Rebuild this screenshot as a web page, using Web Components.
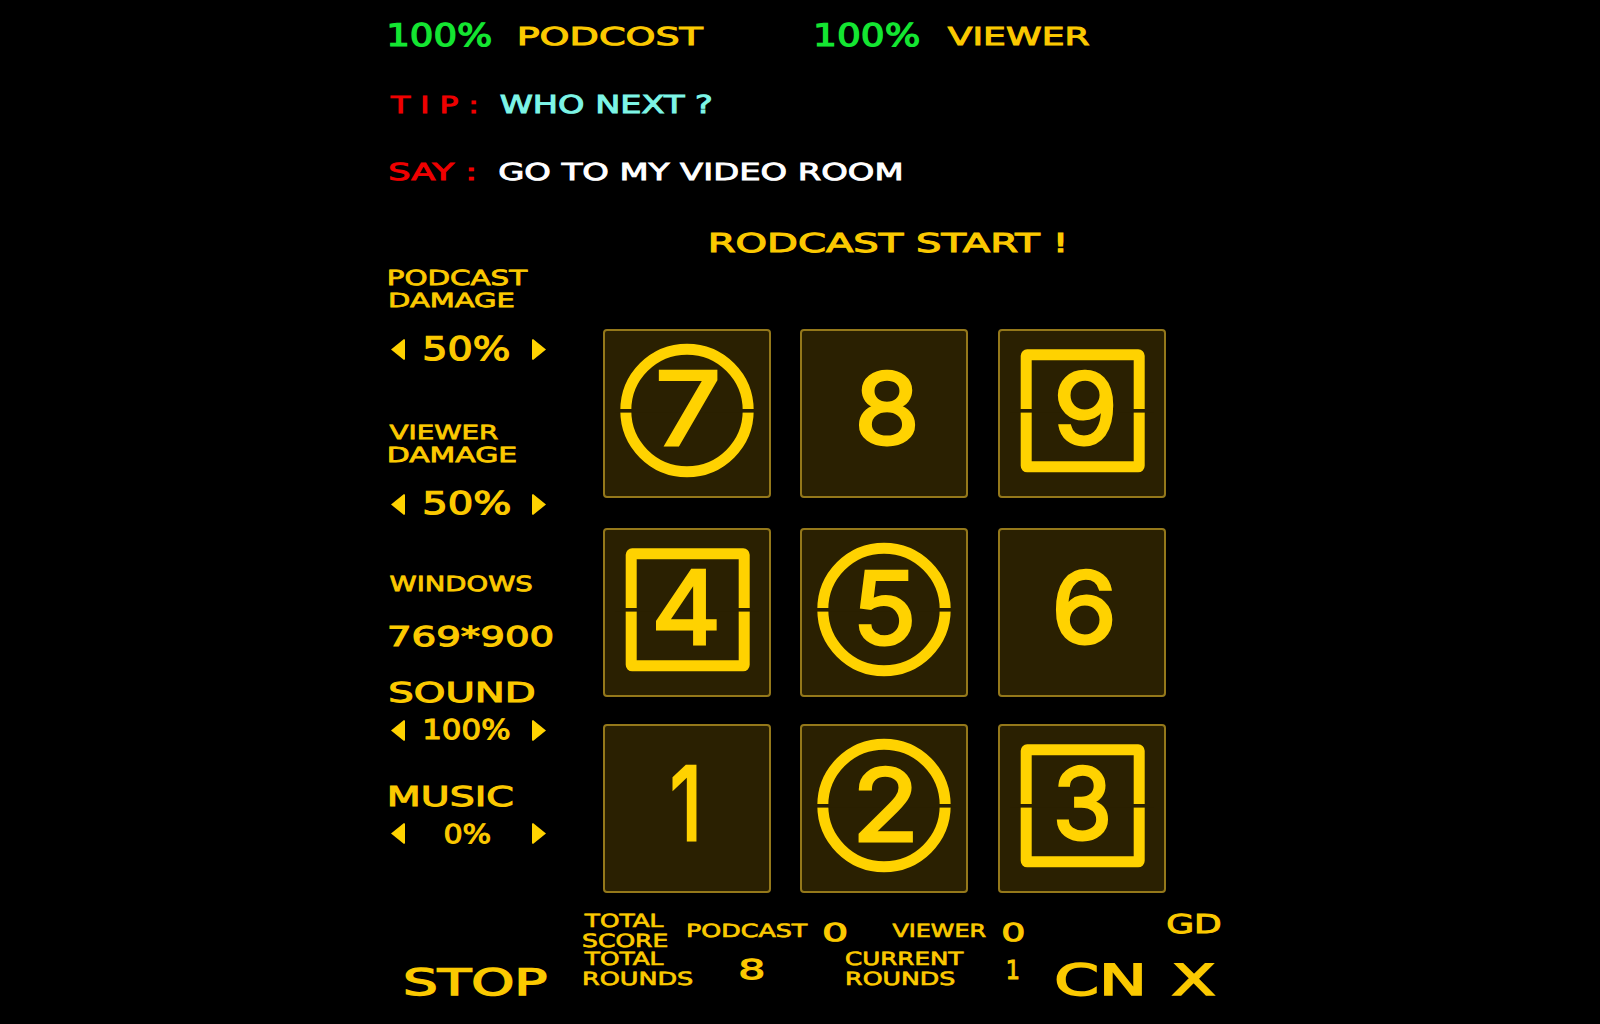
<!DOCTYPE html>
<html lang="en">
<head>
<meta charset="utf-8">
<title>Rodcast</title>
<style>
  html, body { margin: 0; background: #000; overflow: hidden; }
</style>
</head>
<body>
<hud-app></hud-app>
<script>
const measure = document.createElement('canvas').getContext('2d');
measure.textRendering = 'geometricPrecision';

// text fitted to the box of the reference: w = ink width, h = cap height
// with the ink attribute h is the height of the glyphs themselves (the board digits)
class HudText extends HTMLElement {
    connectedCallback() {
        if (this.shadowRoot) return;
        const shadow = this.attachShadow({ mode: 'open' });
        const w = +this.getAttribute('w');
        const h = +this.getAttribute('h');
        const family = this.getAttribute('font') || '"DejaVu Sans"';
        const stroke = +(this.getAttribute('stroke') || (h * 0.05).toFixed(2));
        const ink = this.hasAttribute('ink');
        const text = this.textContent.trim();

        measure.font = `400 100px ${family}`;
        const probe = measure.measureText(ink ? text : 'H');
        const size = (h - stroke) / ((probe.actualBoundingBoxAscent + (ink ? probe.actualBoundingBoxDescent : 0)) / 100);
        measure.font = `400 ${size}px ${family}`;
        const m = measure.measureText(text);
        const scale = w / (m.actualBoundingBoxLeft + m.actualBoundingBoxRight + stroke);
        const shiftX = (m.actualBoundingBoxLeft + stroke / 2) * scale;
        const below = (ink ? m.actualBoundingBoxDescent : 0) + stroke / 2;
        const shiftY = h / 2 - (m.fontBoundingBoxAscent - m.fontBoundingBoxDescent) / 2 - below;

        shadow.innerHTML = `
            <style>
                :host { display: block; flex: none; width: ${w}px; height: ${h}px; }
                span {
                    display: block;
                    width: max-content;
                    white-space: pre;
                    font: 400 ${size}px/${h}px ${family}, sans-serif;
                    text-rendering: geometricPrecision;
                    -webkit-text-stroke: ${stroke}px currentColor;
                    transform-origin: 0 0;
                    transform: translate(${shiftX}px, ${shiftY}px) scaleX(${scale});
                }
            </style>
            <span><slot></slot></span>
        `;
    }
}

class HudStepper extends HTMLElement {
    constructor() {
        super();
        const shadow = this.attachShadow({ mode: 'open' });
        shadow.innerHTML = `
            <style>
                :host {
                    display: grid;
                    grid-template-columns: 14px 1fr 14px;
                    align-items: center;
                    justify-items: center;
                    width: 155px;
                    margin-left: 2px;
                }
                svg { display: block; margin-top: 2px; fill: #ffd200; }
                .value { margin-right: 3px; }
            </style>
            <svg width="14" height="21" viewBox="0 0 14 21"><path d="M0 10.5 13 0 14 .8V20.2L13 21Z"/></svg>
            <div class="value"><slot></slot></div>
            <svg width="14" height="21" viewBox="0 0 14 21"><path d="M14 10.5 1 0 0 .8V20.2L1 21Z"/></svg>
        `;
    }
}

class HudCell extends HTMLElement {
    connectedCallback() {
        if (this.shadowRoot) return;
        const shadow = this.attachShadow({ mode: 'open' });
        const digit = this.getAttribute('digit');
        const mark = this.getAttribute('mark');
        const left = this.getAttribute('left');
        const w = this.getAttribute('w');

        let drawn = '';
        if (mark === 'ring') drawn = '<circle cx="84" cy="81.5" r="61.2" fill="none" stroke="#ffd200" stroke-width="11"/>';
        if (mark === 'box') drawn = '<rect x="28.2" y="25.8" width="113" height="112" rx="1" fill="none" stroke="#ffd200" stroke-width="11"/>';

        shadow.innerHTML = `
            <style>
                :host {
                    display: block;
                    position: relative;
                    box-sizing: border-box;
                    width: 168px;
                    height: 169px;
                    padding: 39px 0 0 ${left - 2}px;
                    background: #2a2001;
                    border: 2px solid #94781a;
                    border-radius: 4px;
                    color: #ffd200;
                }
                svg { position: absolute; left: -2px; top: -2px; }
                hud-text { position: relative; }
            </style>
            ${drawn ? `<svg width="168" height="169" viewBox="0 0 168 169">${drawn}<rect x="12" y="80" width="144" height="3.6" fill="#2a2001"/></svg>` : ''}
            <hud-text ink font="Inter" stroke="3" w="${w}" h="77">${digit}</hud-text>
        `;
    }
}

class HudApp extends HTMLElement {
    constructor() {
        super();
        const shadow = this.attachShadow({ mode: 'open' });
        shadow.innerHTML = `
            <style>
                :host {
                    display: block;
                    box-sizing: border-box;
                    width: 1600px;
                    height: 1024px;
                    padding: 23px 0 0 389px;
                    background: #000;
                    color: #fbc900;
                }
                .row { display: flex; align-items: center; }
                .green { color: #14e632; }
                .red { color: #f00000; }
                .cyan { color: #7df5e6; }
                .white { color: #fff; }
                .tip { margin-top: 47px; height: 19px; }
                .say { margin-top: 49px; height: 18px; }
                .title { margin: 52px 0 0 321px; }
                .main { display: flex; margin-top: 17px; }
                .side { width: 214px; }
                .stack { display: flex; flex-direction: column; }
                .board {
                    display: grid;
                    grid-template-columns: 197px 198px 168px;
                    grid-template-rows: 199px 196px 168px;
                    margin-top: 60px;
                }
                .bottom { display: flex; margin-top: 21px; height: 83px; }
                .stop { margin: 55px 0 0 16px; }
                .stats { margin-left: 36px; width: 473px; padding-top: 1px; }
                .stats .row { height: 34px; }
                .stats .row + .row { margin-top: 4px; }
                .right { display: flex; flex-wrap: wrap; align-items: flex-start; width: 165px; }
                .right .gd { margin-left: 111px; }
                .right .cn { margin-top: 29px; }
                .right .x { margin: 29px 0 0 30px; }
            </style>

            <div class="row">
                <hud-text class="green" w="102" h="24">100%</hud-text>
                <hud-text style="margin-left:28px" w="186" h="19">PODCOST</hud-text>
                <hud-text class="green" style="margin-left:111px" w="103" h="24">100%</hud-text>
                <hud-text style="margin-left:28px" w="143" h="19">VIEWER</hud-text>
            </div>
            <div class="row tip">
                <hud-text class="red" w="88" h="18">T I P :</hud-text>
                <hud-text class="cyan" style="margin-left:22px" w="213" h="19">WHO NEXT ?</hud-text>
            </div>
            <div class="row say">
                <hud-text class="red" w="86" h="18">SAY :</hud-text>
                <hud-text class="white" style="margin-left:24px" w="402" h="18">GO TO MY VIDEO ROOM</hud-text>
            </div>
            <hud-text class="title" w="354" h="20">RODCAST START !</hud-text>

            <div class="main">
                <div class="side stack">
                    <hud-text w="139" h="16">PODCAST</hud-text>
                    <hud-text style="margin-top:7px" w="126" h="15">DAMAGE</hud-text>
                    <hud-stepper style="margin-top:29px"><hud-text w="86" h="25">50%</hud-text></hud-stepper>
                    <hud-text style="margin-top:63px" w="109" h="15">VIEWER</hud-text>
                    <hud-text style="margin-top:7px" w="127" h="16">DAMAGE</hud-text>
                    <hud-stepper style="margin-top:29px"><hud-text w="86" h="24">50%</hud-text></hud-stepper>
                    <hud-text style="margin-top:60px" w="144" h="16">WINDOWS</hud-text>
                    <hud-text style="margin-top:35px" w="164" h="21">769*900</hud-text>
                    <hud-text style="margin-top:35px" w="146" h="21">SOUND</hud-text>
                    <hud-stepper style="margin-top:15px"><hud-text w="85" h="21">100%</hud-text></hud-stepper>
                    <hud-text style="margin-top:45px" w="124" h="21">MUSIC</hud-text>
                    <hud-stepper style="margin-top:14px"><hud-text w="47" h="20">0%</hud-text></hud-stepper>
                </div>
                <div class="board">
                    <hud-cell digit="7" mark="ring" left="55" w="60"></hud-cell>
                    <hud-cell digit="8" left="58" w="58"></hud-cell>
                    <hud-cell digit="9" mark="box" left="59" w="57"></hud-cell>
                    <hud-cell digit="4" mark="box" left="52" w="62"></hud-cell>
                    <hud-cell digit="5" mark="ring" left="58" w="54"></hud-cell>
                    <hud-cell digit="6" left="57" w="58"></hud-cell>
                    <hud-cell digit="1" left="69" w="25"></hud-cell>
                    <hud-cell digit="2" mark="ring" left="58" w="55"></hud-cell>
                    <hud-cell digit="3" mark="box" left="59" w="52"></hud-cell>
                </div>
            </div>

            <div class="bottom">
                <hud-text class="stop" w="142" h="28">STOP</hud-text>
                <div class="stats">
                    <div class="row">
                        <div class="stack" style="gap:6px">
                            <hud-text w="82" h="14">TOTAL</hud-text>
                            <hud-text w="85" h="14">SCORE</hud-text>
                        </div>
                        <hud-text style="margin-left:19px" w="122" h="14">PODCAST</hud-text>
                        <hud-text style="margin-left:14px" w="25" h="19">0</hud-text>
                        <hud-text style="margin-left:44px" w="95" h="14">VIEWER</hud-text>
                        <hud-text style="margin-left:15px" w="23" h="19">0</hud-text>
                    </div>
                    <div class="row">
                        <div class="stack" style="gap:6px">
                            <hud-text w="82" h="14">TOTAL</hud-text>
                            <hud-text w="110" h="14">ROUNDS</hud-text>
                        </div>
                        <hud-text style="margin-left:46px" w="25" h="21">8</hud-text>
                        <div class="stack" style="gap:6px;margin-left:82px">
                            <hud-text w="119" h="14">CURRENT</hud-text>
                            <hud-text w="109" h="14">ROUNDS</hud-text>
                        </div>
                        <hud-text style="margin-left:42px" w="12" h="20">1</hud-text>
                    </div>
                </div>
                <div class="right">
                    <hud-text class="gd" w="54" h="20">GD</hud-text>
                    <hud-text class="cn" w="86" h="33">CN</hud-text>
                    <hud-text class="x" w="44" h="33">X</hud-text>
                </div>
            </div>
        `;
    }
}

customElements.define('hud-text', HudText);
customElements.define('hud-stepper', HudStepper);
customElements.define('hud-cell', HudCell);
customElements.define('hud-app', HudApp);
</script>
</body>
</html>
